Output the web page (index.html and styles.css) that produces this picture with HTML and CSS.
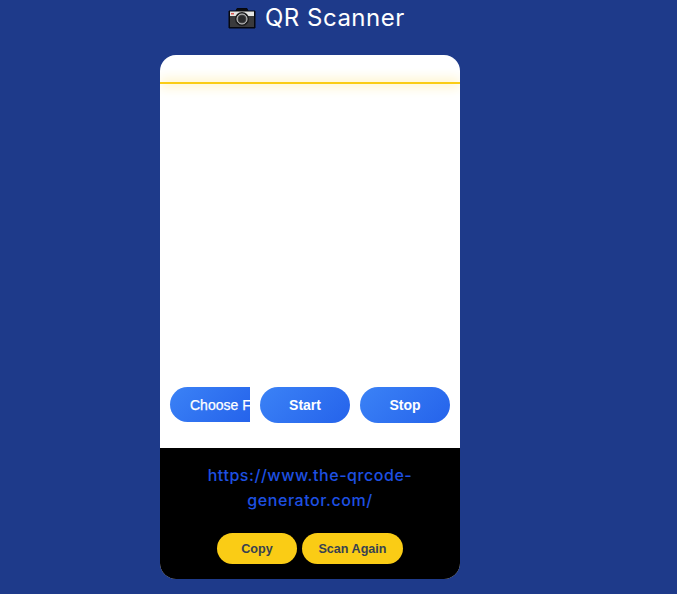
FILE: index.html
```html
<!DOCTYPE html>
<html lang="en">
<head>
    <meta charset="UTF-8">
    <meta name="viewport" content="width=device-width, initial-scale=1.0">
    <title>QR Scanner</title>
    <link rel="stylesheet" href="styles.css">
</head>
<body>
    <h1 class="page-title">
        <svg class="camera-icon" width="28" height="22" viewBox="0 0 28 22" aria-hidden="true">
            <path d="M1 4h7l1-2.500h10l1 2.500h7v17H1z" fill="#0b0b0f" stroke="#05070f"/>
            <rect x="2" y="4.500" width="24" height="4.500" fill="#e4e4e2"/>
            <rect x="2" y="9" width="24" height="11" fill="#3a3a3c"/>
            <rect x="3" y="6" width="3" height="1.500" fill="#d9534f"/>
            <circle cx="14" cy="12" r="7" fill="#1b1b1d"/>
            <circle cx="14" cy="12" r="5" fill="#4a4a4c" stroke="#d0d0d0"/>
            <circle cx="14" cy="12" r="3.500" fill="#2a2a2c"/>
        </svg>
        <span>QR Scanner</span>
    </h1>

    <div class="scanner-card">
        <div class="scan-line"></div>
        <div class="reader"></div>
        <div class="controls">
            <input class="file-input" type="file">
            <button class="btn">Start</button>
            <button class="btn">Stop</button>
        </div>
        <div class="result">
            <a class="result-link" href="#">https://www.the-qrcode-generator.com/</a>
            <div class="result-actions">
                <button class="btn-yellow copy-btn">Copy</button>
                <button class="btn-yellow again-btn">Scan Again</button>
            </div>
        </div>
    </div>
</body>
</html>
```

FILE: styles.css
```css
body {
    margin: 0;
    height: 594px;
    overflow: hidden;
    background-color: #1e3a8a;
    font-family: "Liberation Sans", Arial, sans-serif;
}

.page-title {
    display: flex;
    align-items: center;
    gap: 9px;
    height: 35px;
    margin: 0 0 20px;
    padding-left: 228px;
    color: white;
    font-family: Inter, sans-serif;
    font-size: 24px;
    font-weight: 400;
    letter-spacing: 0.5px;
}

.camera-icon {
    flex: none;
}

.scanner-card {
    position: relative;
    width: 300px;
    height: 524px;
    margin-left: 160px;
    display: flex;
    flex-direction: column;
    background-color: white;
    border-radius: 16px;
    overflow: hidden;
}

.scan-line {
    position: absolute;
    top: 27px;
    left: 0;
    right: 0;
    height: 2px;
    background-color: #facc15;
    box-shadow: 0 0 12px #facc15;
}

.reader {
    flex: 1;
}

.controls {
    display: flex;
    gap: 10px;
    padding: 0 10px 25px;
}

.btn {
    width: 90px;
    height: 36px;
    border: none;
    border-radius: 18px;
    background: linear-gradient(135deg, #3b82f6, #2563eb);
    color: white;
    font-family: inherit;
    font-size: 14px;
    font-weight: bold;
}

.file-input {
    box-sizing: border-box;
    width: 80px;
    height: 35px;
    padding: 0;
    border-radius: 18px 0 0 18px;
    background: linear-gradient(135deg, #3b82f6, #2563eb);
    color: transparent;
    font-family: inherit;
    font-size: 14px;
}

.file-input::file-selector-button {
    height: 35px;
    margin: 0;
    padding: 0 20px;
    border: none;
    background: transparent;
    color: white;
    font-family: inherit;
    font-size: 14px;
    font-weight: normal;
    -webkit-text-stroke: 0.25px white;
}

.result {
    height: 131px;
    background-color: black;
    text-align: center;
    box-sizing: border-box;
    padding-top: 15px;
}

.result-link {
    display: block;
    padding: 0 40px;
    color: #1e50e2;
    font-family: Inter, sans-serif;
    font-size: 16px;
    font-weight: 500;
    letter-spacing: 0.55px;
    line-height: 25px;
    text-decoration: none;
}

.result-actions {
    display: flex;
    justify-content: center;
    gap: 5px;
    margin-top: 20px;
}

.btn-yellow {
    height: 31px;
    padding: 0;
    border: none;
    border-radius: 16px;
    background-color: #facc15;
    color: #374151;
    font-family: inherit;
    font-size: 12.6px;
    font-weight: bold;
}

.copy-btn {
    width: 80px;
}

.again-btn {
    width: 101px;
}
```
